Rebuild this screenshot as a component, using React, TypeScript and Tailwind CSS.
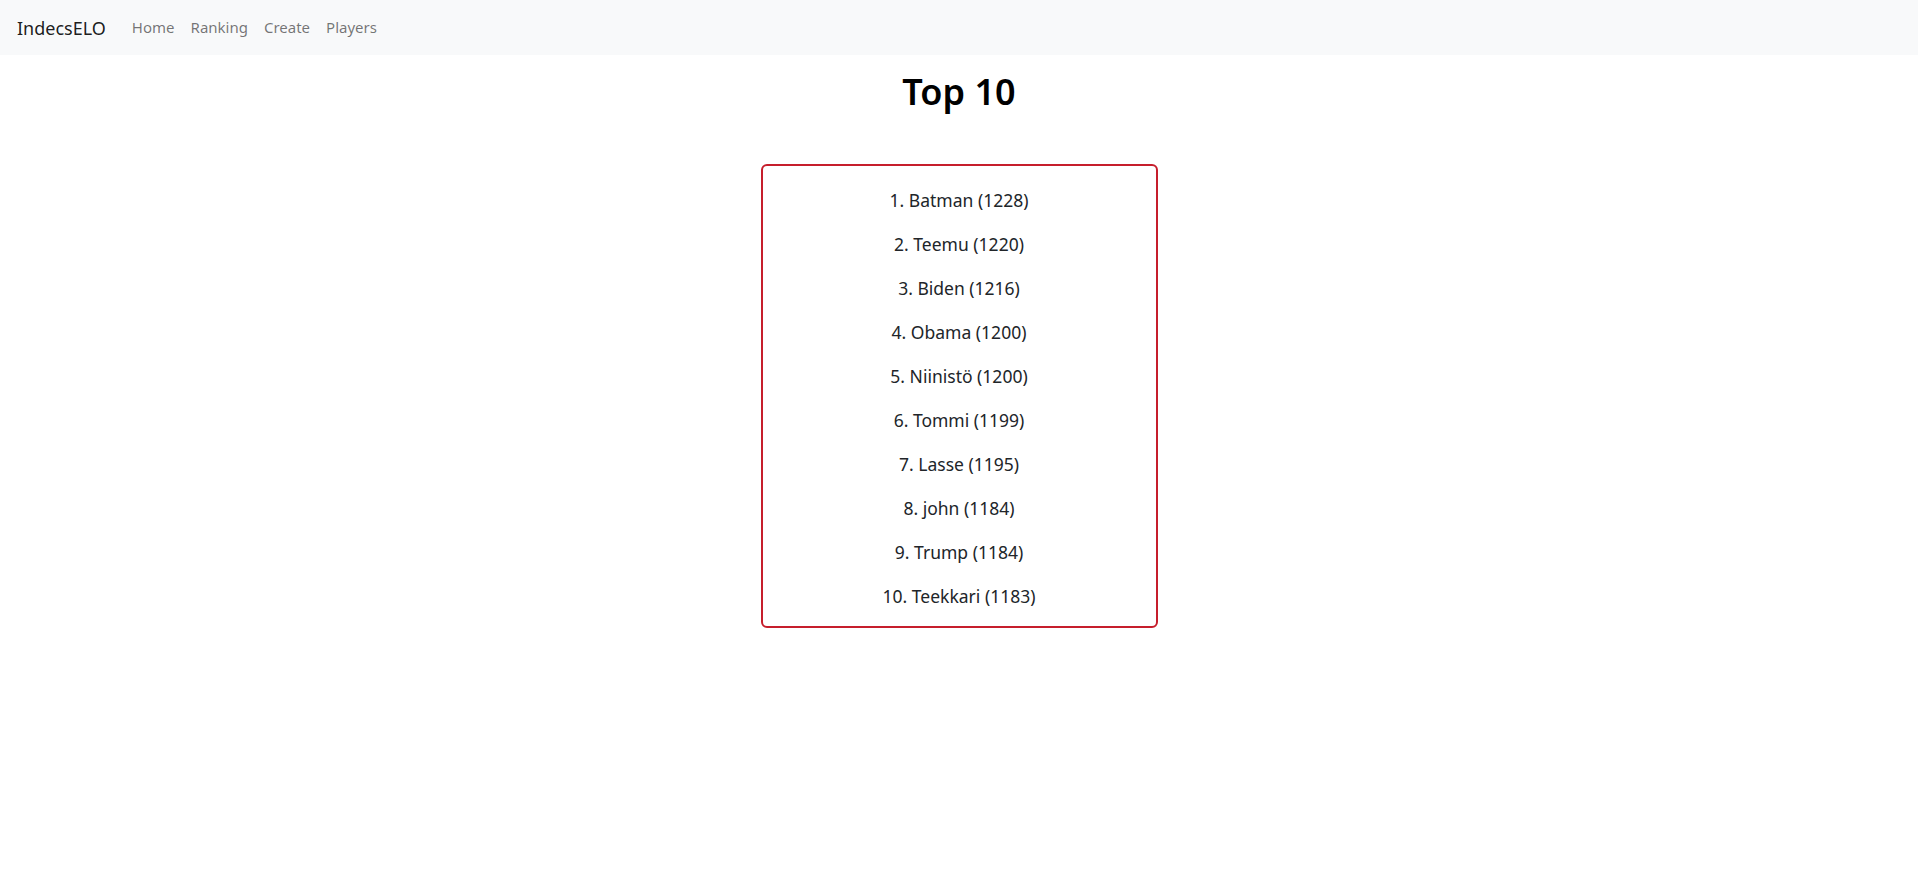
const players = [
  { name: 'Batman', elo: 1228 },
  { name: 'Teemu', elo: 1220 },
  { name: 'Biden', elo: 1216 },
  { name: 'Obama', elo: 1200 },
  { name: 'Niinistö', elo: 1200 },
  { name: 'Tommi', elo: 1199 },
  { name: 'Lasse', elo: 1195 },
  { name: 'john', elo: 1184 },
  { name: 'Trump', elo: 1184 },
  { name: 'Teekkari', elo: 1183 },
];

export default function App() {
  return (
    <div className="min-h-screen bg-white text-[#212529] font-['Noto_Sans','Liberation_Sans',sans-serif]">
      <nav className="h-[55px] bg-[#f8f9fa] flex items-center pl-[17px]">
        <a href="#" className="text-[18px] text-black/90 mr-[18px] leading-[30px]">IndecsELO</a>
        <div className="flex items-center text-[15px] text-black/55">
          <a href="#" className="px-2">Home</a>
          <a href="#" className="px-2">Ranking</a>
          <a href="#" className="px-2">Create</a>
          <a href="#" className="px-2">Players</a>
        </div>
      </nav>

      <main className="flex flex-col items-center">
        <h1 className="mt-[13px] text-[36px] leading-[48px] font-semibold text-black">Top 10</h1>
        <div className="mt-[48px] w-[397px] border-2 border-[#c61e2c] rounded-[6px] pt-[19px] pb-[15px] flex flex-col items-center gap-[14px]">
          {players.map((p, i) => (
            <p key={p.name} className="text-[17.5px] leading-[30px]">
              {i + 1}. {p.name} ({p.elo})
            </p>
          ))}
        </div>
      </main>
    </div>
  );
}
